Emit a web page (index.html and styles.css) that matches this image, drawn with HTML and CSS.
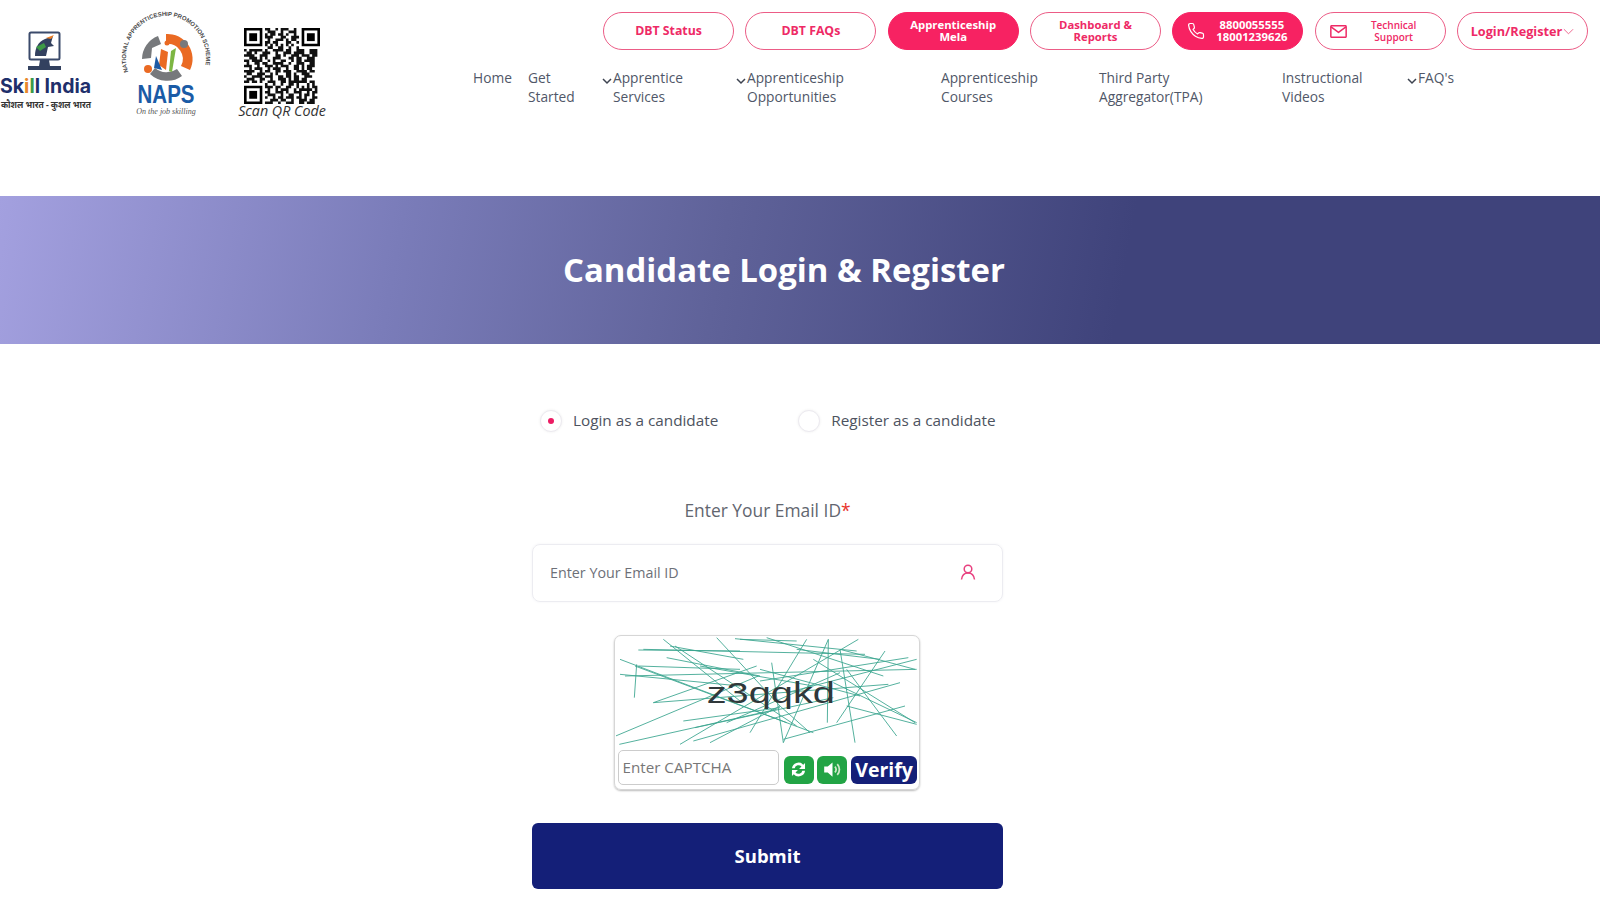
FILE: index.html
```html
<!DOCTYPE html>
<html lang="en">
<head>
<meta charset="utf-8">
<title>Candidate Login &amp; Register</title>
<link rel="stylesheet" href="styles.css">
</head>
<body>
<header class="site-header">
  <div class="logos">
    <svg class="logo-skill" viewBox="0 0 100 120" width="100" height="120">
      <rect x="29.500" y="32.500" width="30" height="27" rx="1.500" fill="#fff" stroke="#3b4a6b" stroke-width="2"/>
      <path d="M35 56c0-8 3-14 10-17l8-3-2 7 3 3-6 1-2 9z" fill="#33415f"/>
      <path d="M46 38l8-3-3 4z" fill="#ef7d22"/><path d="M36 47l8-4 2 4-6 4z" fill="#3d9a46"/>
      <path d="M40 60h9l1 6h-11z" fill="#33415f"/><rect x="28" y="66" width="33" height="4" fill="#33415f"/>
      <text class="skill-name" x="0" y="93">Sk<tspan fill="#e8872b">i</tspan><tspan fill="#3d9a46">l</tspan>l India</text>
      <text class="skill-hindi" x="1" y="108" textLength="90" lengthAdjust="spacingAndGlyphs">कौशल भारत - कुशल भारत</text>
    </svg>
    <svg class="logo-naps" viewBox="0 0 100 120" width="100" height="120">
      <defs><path id="ring" d="M8.300 64A40 42 0 1 1 83.700 64"/></defs>
      <text class="naps-ring"><textPath href="#ring" textLength="150">NATIONAL APPRENTICESHIP PROMOTION SCHEME</textPath></text>
      <g class="naps-emblem">
        <path d="M48 33a25 25 0 0 1 24 36l-9-4a15 15 0 0 0-15-22z" fill="#ea6a23"/>
        <path d="M24 58a25 25 0 0 1 16-23l3 8-9 4-1 10z" fill="#77797c"/>
        <path d="M32 73a25 25 0 0 0 32 2l-5-7a18 18 0 0 1-22-1z" fill="#77797c"/>
        <circle cx="30" cy="68" r="4" fill="#ea6a23"/><circle cx="66" cy="43" r="4" fill="#77797c"/><circle cx="49" cy="42" r="2.500" fill="#ea6a23"/>
        <path d="M43 48l7 3-2 18-7-5z" fill="#ea6a23"/><path d="M38 55l6 14-8-2z" fill="#1d5aa5"/><path d="M58 47l-4 24-3-1 2-20z" fill="#7db643"/>
      </g>
      <text class="naps-name" x="46" y="95" textLength="57" lengthAdjust="spacingAndGlyphs">NAPS</text>
      <text class="naps-tag" x="46" y="106">On the job skilling</text>
    </svg>
    <div class="qr-block">
      <svg class="qr" viewBox="0 0 29 29" width="76" height="76">
        <defs><g id="finder"><path d="M0 0h7v7h-7zM1 1v5h5v-5z" fill-rule="evenodd"/><rect x="2" y="2" width="3" height="3"/></g></defs>
        <use href="#finder"/><use href="#finder" x="22"/><use href="#finder" y="22"/>
        <path class="qr-data" d="M8 .5h2m2 0h1m1 0h3m2 0h1M9 1.500h3m2 0h1m2 0h3M8 2.500h1m1 0h2m1 0h2m1 0h1m2 0h1M8 3.500h3m3 0h2m2 0h3M9 4.500h1m2 0h3m1 0h1m1 0h2M8 5.500h2m1 0h2m3 0h2m2 0h1M8 6.500h1m1 0h1m1 0h1m1 0h1m1 0h1m1 0h1M9 7.500h2m2 0h2m2 0h1m2 0h1M0 8.500h1m1 0h5m1 0h1m2 0h4m1 0h2m2 0h3m2 0h3M1 9.500h2m1 0h1m2 0h3m2 0h1m2 0h3m1 0h4m2 0h3M0 10.500h4m2 0h3m3 0h2m1 0h1m2 0h3m1 0h3m1 0h2M2 11.500h3m1 0h1m1 0h1m2 0h3m3 0h2m1 0h2m2 0h3M0 12.500h2m1 0h4m2 0h1m1 0h1m2 0h2m2 0h1m1 0h2m1 0h4M1 13.500h1m2 0h2m1 0h2m2 0h4m2 0h1m2 0h3m2 0h2M0 14.500h3m2 0h1m2 0h3m1 0h1m1 0h3m2 0h2m1 0h1m1 0h3M2 15.500h1m1 0h3m2 0h1m1 0h3m2 0h1m2 0h2m1 0h1m1 0h2M0 16.500h4m2 0h1m1 0h2m2 0h2m1 0h3m2 0h4m1 0h2M1 17.500h2m2 0h3m2 0h1m1 0h1m3 0h2m1 0h1m2 0h3M0 18.500h1m2 0h4m1 0h3m2 0h2m1 0h2m1 0h2m2 0h3M1 19.500h3m2 0h2m2 0h1m2 0h3m1 0h1m1 0h2m1 0h2M0 20.500h2m1 0h2m1 0h1m2 0h3m2 0h2m1 0h7m1 0h2M8 21.500h1m2 0h1m2 0h1m2 0h2m1 0h1m3 0h1m1 0h1M8 22.500h3m1 0h2m2 0h2m2 0h1m1 0h1m1 0h1m1 0h2M9 23.500h1m2 0h1m1 0h3m2 0h1m1 0h5m1 0h1M8 24.500h2m2 0h3m1 0h1m2 0h3m2 0h1m1 0h2M9 25.500h3m2 0h1m2 0h2m2 0h1m1 0h2m1 0h1M8 26.500h1m2 0h1m1 0h2m1 0h3m1 0h2m1 0h1m2 0h2M10 27.500h3m1 0h2m2 0h1m2 0h3m1 0h2M8 28.500h3m2 0h1m2 0h3m2 0h2m1 0h3"/>
      </svg>
      <span class="qr-caption">Scan QR Code</span>
    </div>
  </div>

  <div class="header-right">
    <div class="actions">
      <a class="pill">DBT Status</a>
      <a class="pill">DBT FAQs</a>
      <a class="pill pill-solid pill-tight">Apprenticeship<br>Mela</a>
      <a class="pill pill-tight">Dashboard &amp;<br>Reports</a>
      <a class="pill pill-solid pill-icon pill-tight">
        <svg class="pill-svg" viewBox="0 0 24 24" width="18" height="18"><path d="M22 16.920v3a2 2 0 0 1-2.180 2 19.790 19.790 0 0 1-8.630-3.070 19.500 19.500 0 0 1-6-6 19.790 19.790 0 0 1-3.070-8.670A2 2 0 0 1 4.110 2h3a2 2 0 0 1 2 1.720 12.840 12.840 0 0 0 .7 2.810 2 2 0 0 1-.45 2.110L8.090 9.910a16 16 0 0 0 6 6l1.270-1.270a2 2 0 0 1 2.110-.45 12.840 12.840 0 0 0 2.810.7A2 2 0 0 1 22 16.92z"/></svg>
        <span class="pill-label">8800055555<br>18001239626</span>
      </a>
      <a class="pill pill-icon pill-small">
        <svg class="pill-svg" viewBox="0 0 18 14" width="17" height="13"><rect x=".75" y=".75" width="16.500" height="12.500" rx="1"/><path d="M1 2l8 6 8-6"/></svg>
        <span class="pill-label">Technical<br>Support</span>
      </a>
      <a class="pill pill-login">Login/Register<svg class="pill-chev" viewBox="0 0 12 7" width="11" height="7"><path d="M1 1l5 5 5-5"/></svg></a>
    </div>
    <nav class="main-nav">
      <a class="nav-item">Home</a>
      <a class="nav-item">Get<br>Started</a>
      <a class="nav-item"><svg class="chev" viewBox="0 0 10 7" width="10" height="7"><path d="M1 1l4 4 4-4"/></svg><span>Apprentice<br>Services</span></a>
      <a class="nav-item"><svg class="chev" viewBox="0 0 10 7" width="10" height="7"><path d="M1 1l4 4 4-4"/></svg><span>Apprenticeship<br>Opportunities</span></a>
      <a class="nav-item">Apprenticeship<br>Courses</a>
      <a class="nav-item">Third Party<br>Aggregator(TPA)</a>
      <a class="nav-item">Instructional<br>Videos</a>
      <a class="nav-item"><svg class="chev" viewBox="0 0 10 7" width="10" height="7"><path d="M1 1l4 4 4-4"/></svg><span>FAQ's</span></a>
    </nav>
  </div>
</header>

<section class="banner"><h1 class="banner-title">Candidate Login &amp; Register</h1></section>

<main class="form-wrap">
  <div class="radios">
    <label class="radio"><span class="radio-mark radio-on"></span>Login as a candidate</label>
    <label class="radio"><span class="radio-mark"></span>Register as a candidate</label>
  </div>
  <p class="field-label">Enter Your Email ID<span class="req">*</span></p>
  <div class="field">
    <input class="field-input" type="text" placeholder="Enter Your Email ID">
    <svg class="field-icon" viewBox="0 0 16 16" width="16" height="16"><circle cx="8" cy="5" r="3.800"/><path d="M1.500 15.500c.5-4 3-6.500 6.500-6.500s6 2.500 6.500 6.500"/></svg>
  </div>
  <div class="captcha">
    <svg class="captcha-img" viewBox="48 33 906 336" width="302" height="112">
      <path class="captcha-lines" d="M115 72L420 75M190 40L420 225M350 35L540 240M405 38L770 75M500 35L850 150M685 40L550 350M47 330L475 150M58 355L530 250M240 355L775 40M110 115L103 215M60 100L560 290M75 150L950 130M105 120L640 320M550 340L915 240M685 40L682 290M720 70L765 350M515 110L550 350M855 75L710 290M925 95L480 165M160 230L865 175M740 130L890 330M700 170L950 290M280 345L900 170M130 70L795 85M225 60L590 300M450 320L620 40M60 145L420 180M945 130L720 70M640 100L945 290M250 285L540 245M540 240L630 320M285 305L700 215M160 230L470 120M200 95L480 150M300 120L640 180M380 290L720 140M210 60L430 100M420 40L590 45M115 120L420 130M330 350L540 240M480 130L780 210M560 200L950 100M740 240L950 295M590 70L840 100"/>
      <text class="captcha-text" x="320" y="232" textLength="385" lengthAdjust="spacingAndGlyphs">z3qqkd</text>
    </svg>
    <div class="captcha-row">
      <input class="captcha-input" type="text" placeholder="Enter CAPTCHA">
      <button class="cap-btn cap-green" type="button" aria-label="Refresh"><svg viewBox="0 0 16 16" width="19" height="19"><path d="M2.500 7a5.500 5.500 0 0 1 9.500-3l1.500-1.500V7.500H8.500l2-2a3.300 3.300 0 0 0-5.700 1.500zM13.500 9a5.500 5.500 0 0 1-9.500 3l-1.500 1.500V8.500h5l-2 2a3.300 3.300 0 0 0 5.700-1.500z"/></svg></button>
      <button class="cap-btn cap-green" type="button" aria-label="Audio"><svg viewBox="0 0 16 16" width="19" height="19"><path d="M1 5.500h3l4-3.500v12l-4-3.500H1z"/><path class="wave" d="M10 5.500a3.500 3.500 0 0 1 0 5M12 3.500a6.500 6.500 0 0 1 0 9"/></svg></button>
      <button class="cap-btn cap-verify" type="button">Verify</button>
    </div>
  </div>
  <button class="submit" type="button">Submit</button>
</main>
</body>
</html>
```
FILE: styles.css
```css
* { box-sizing: border-box; }
html, body { margin: 0; padding: 0; }
body {
  width: 1600px;
  height: 900px;
  overflow: hidden;
  background: #fff;
  font-family: "Open Sans", "Noto Sans", sans-serif;
  color: #4a5060;
}

/* Header */
.site-header { display: flex; height: 196px; }
.logos { flex: 0 0 473px; display: flex; align-items: flex-start; gap: 20px; }
.logo-naps { margin-top: 8px; }
.naps-emblem { transform: translate(-2px, -7px); }
.qr-block { display: flex; flex-direction: column; align-items: center; margin-top: 28px; margin-left: -3px; width: 90px; }
.qr { display: block; }
.qr-data { fill: none; stroke: #111; stroke-width: 1; }
.qr-caption { font-size: 14.300px; font-style: italic; color: #333; line-height: 14px; white-space: nowrap; }
.skill-name { font: 700 19.500px "Inter", "Liberation Sans", sans-serif; fill: #1f2f6b; }
.skill-hindi { font: 700 9px "Noto Sans", "Noto Sans CJK SC", sans-serif; fill: #333; }
.naps-ring { font: 700 6px "Liberation Sans", sans-serif; fill: #4a4a4a; }
.naps-name { font: 700 26px "Liberation Sans", sans-serif; fill: #1a5ba6; text-anchor: middle; }
.naps-tag { font: italic 8px "Liberation Serif", serif; fill: #555; text-anchor: middle; }

.header-right { flex: 1; display: flex; flex-direction: column; }
.actions { display: flex; justify-content: flex-end; gap: 11.330px; padding: 12px 12px 0 0; }
.pill {
  flex: 0 0 131px;
  height: 38px;
  border: 1.700px solid #ec5c86;
  border-radius: 19px;
  display: flex;
  align-items: center;
  justify-content: center;
  text-align: center;
  font-size: 12.300px;
  line-height: 12px;
  font-weight: 700;
  color: #ee2a66;
  background: #fff;
}
.pill-tight { font-size: 11.300px; }
.pill-solid { background: #f72262; border-color: #f72262; color: #fff; }
.pill-icon { justify-content: flex-start; padding-left: 14px; }
.pill-label { flex: 1; padding-right: 4px; }
.pill-small { font-size: 10px; font-weight: 600; }
.pill-svg { flex: none; fill: none; stroke: currentColor; stroke-width: 1.600; stroke-linejoin: round; }
.pill-login { font-size: 12.700px; }
.pill-chev { flex: none; margin-left: 1px; fill: none; stroke: #ee5f88; stroke-width: 1; }

.main-nav {
  display: grid;
  grid-template-columns: 55px 74px 134px 205px 158px 183px 125px auto;
  margin-top: 18px;
}
.nav-item { display: flex; font-size: 13.750px; line-height: 19.200px; color: #505768; align-items: flex-start; white-space: nowrap; }
.nav-item:nth-child(1), .nav-item:nth-child(2), .nav-item:nth-child(5), .nav-item:nth-child(6), .nav-item:nth-child(7) { display: block; }
.chev { flex: none; margin: 10px 1px 0 0; fill: none; stroke: #3d4350; stroke-width: 1.500; }

/* Banner */
.banner {
  height: 148px;
  display: flex;
  align-items: center;
  justify-content: center;
  padding: 0 32px 2px 0;
  background: linear-gradient(100deg, #a3a0df 0%, #7a7cb9 25%, #5f6299 45%, #3f437b 70%, #3f437b 100%);
}
.banner-title { margin: 0; font-size: 32.900px; line-height: 45px; font-weight: 700; color: #fff; }

/* Form */
.form-wrap { width: 471px; margin-left: 532px; display: flex; flex-direction: column; align-items: center; }
.radios { align-self: stretch; display: flex; gap: 80px; padding: 65px 0 0 8px; height: 142px; }
.radio { display: flex; align-items: flex-start; font-size: 15.300px; line-height: 22px; color: #4d5360; gap: 11px; }
.radio-mark { width: 22px; height: 22px; border-radius: 50%; border: 1px solid #eceaf0; background: #fff; flex: none; display: flex; align-items: center; justify-content: center; margin-top: 1px; box-shadow: 0 0 3px #eee; }
.radio-on::after { content: ""; width: 6px; height: 6px; border-radius: 50%; background: #ec1c63; }
.field-label { margin: 11.500px 0 22px; font-size: 17.400px; line-height: 24px; color: #62666f; }
.req { color: #e8342c; }
.field { align-self: stretch; height: 58px; flex: none; border: 1px solid #ececf1; border-radius: 8px; display: flex; align-items: center; padding: 0 26px 0 17px; box-shadow: 0 0 3px #f2f2f5; }
.field-input { flex: 1; border: 0; outline: 0; font: 14.300px "Open Sans", sans-serif; color: #666; background: transparent; padding: 0; }
.field-input::placeholder { color: #6d7078; opacity: 1; }
.field-icon { flex: none; fill: none; stroke: #e8407f; stroke-width: 1.500; margin-top: -2px; }

.captcha { margin: 33px 2px 0 0; width: 306px; height: 155px; flex: none; border: 1px solid #d6d6d6; border-radius: 7px; box-shadow: 0 1px 2px #bbb; display: flex; flex-direction: column; padding: 1px; }
.captcha-img { display: block; flex: none; }
.captcha-lines { fill: none; stroke: #3aa58f; stroke-width: 2.600; }
.captcha-text { font: 90px "Liberation Sans", sans-serif; fill: #30383a; }
.captcha-row { display: flex; align-items: center; gap: 3.500px; padding-left: 2px; margin-top: 3px; }
.captcha-input { width: 161px; height: 35px; border: 1px solid #ccc; border-radius: 5px; font: 15.200px "Open Sans", sans-serif; padding: 0 4px; margin-right: 2px; outline: 0; margin-top: -2px; }
.captcha-input::placeholder { color: #777; opacity: 1; }
.cap-btn { border: 0; padding: 0; height: 28px; border-radius: 6px; display: flex; align-items: center; justify-content: center; color: #fff; margin-top: 3px; }
.cap-green { width: 30px; background: #22a445; }
.cap-green svg { fill: #fff; }
.wave { fill: none; stroke: #cfe9c8; stroke-width: 1.500; }
.cap-verify { width: 67px; background: #141f78; font: 700 19.500px "Open Sans", sans-serif; }

.submit { margin-top: 33px; align-self: stretch; height: 66px; flex: none; border: 0; border-radius: 6px; background: #141f78; color: #fff; font: 700 18.500px "Open Sans", sans-serif; }
```
